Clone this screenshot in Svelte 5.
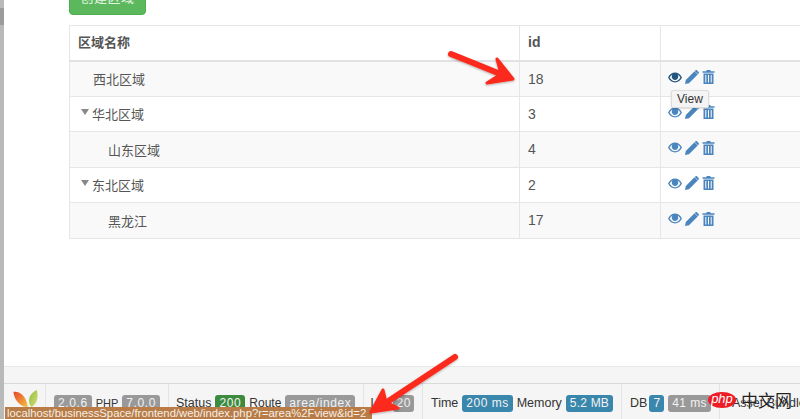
<script>
    const rows = [
        { name: '西北区域', id: 18, level: 'leaf-top' },
        { name: '华北区域', id: 3, level: 'parent' },
        { name: '山东区域', id: 4, level: 'child' },
        { name: '东北区域', id: 2, level: 'parent' },
        { name: '黑龙江', id: 17, level: 'child' }
    ];

    const badges = {
        version: '2.0.6',
        php: '7.0.0'
    };
</script>

{#snippet eye()}
    <svg class="icon" viewBox="0 0 16 12" width="14" height="11" aria-hidden="true">
        <path fill="currentColor" fill-rule="evenodd" d="M0 6C2 2.2 4.8.4 8 .4S14 2.2 16 6c-2 3.8-4.800 5.600-8 5.600S2 9.800 0 6zm1.800 0C3.300 8.600 5.400 10.200 8 10.200S12.700 8.600 14.200 6C13.300 4.500 12.200 3.300 10.900 2.600 11.400 3.300 11.700 4.100 11.700 5c0 2.100-1.700 3.800-3.700 3.800S4.300 7.100 4.300 5c0-.9.300-1.700.8-2.400C3.800 3.300 2.700 4.500 1.800 6z" />
    </svg>
{/snippet}

{#snippet pencil()}
    <svg class="icon" viewBox="0 0 14 14" width="14" height="14" aria-hidden="true">
        <path fill="currentColor" d="M0 14l.8-4L9.500 1.300l3.200 3.200L4 13.200zM10.400.4c.5-.5 1.200-.5 1.700 0l1.500 1.500c.5.5.5 1.200 0 1.700l-.6.6-3.200-3.200z" />
    </svg>
{/snippet}

{#snippet trash()}
    <svg class="icon" viewBox="0 0 12 14" width="13" height="14" aria-hidden="true">
        <path fill="currentColor" fill-rule="evenodd" d="M4.300 0h3.400l.6 1.300H12v1.400H0V1.300h3.700zM1 3.600h10V14H1zm1.800 1.400v7.600h1V5zm2.700 0v7.600h1V5zm2.700 0v7.600h1V5z" />
    </svg>
{/snippet}

<div class="page">
    <div class="gutter"><span class="thumb"></span></div>

    <div class="main">
        <section class="content">
            <button class="create">创建区域</button>

            <table>
                <colgroup>
                    <col class="col-name" />
                    <col class="col-id" />
                    <col class="col-actions" />
                </colgroup>
                <thead>
                    <tr>
                        <th>区域名称</th>
                        <th class="latin">id</th>
                        <th></th>
                    </tr>
                </thead>
                <tbody>
                    {#each rows as row, i}
                        <tr class:striped={i % 2 === 0}>
                            <td class="name {row.level}">
                                {#if row.level === 'parent'}<span class="caret"></span>{/if}{row.name}
                            </td>
                            <td class="latin">{row.id}</td>
                            <td class="actions">
                                <div class="action-icons">
                                    <span class:hovered={i === 0} class="eye-wrap">{@render eye()}</span>
                                    {@render pencil()}
                                    {@render trash()}
                                </div>
                            </td>
                        </tr>
                    {/each}
                </tbody>
            </table>
        </section>

        <div class="strip"></div>

        <footer class="toolbar">
            <div class="block logo">
                <svg viewBox="0 0 28 20" width="26" height="18" aria-hidden="true">
                    <defs>
                        <linearGradient id="leaf-a" x1="0" y1="0" x2="1" y2="1">
                            <stop offset="0" stop-color="#e8452c" />
                            <stop offset="1" stop-color="#f5c33f" />
                        </linearGradient>
                        <linearGradient id="leaf-b" x1="0" y1="0" x2="1" y2="1">
                            <stop offset="0" stop-color="#8fbf3a" />
                            <stop offset="1" stop-color="#d8dd7a" />
                        </linearGradient>
                    </defs>
                    <path fill="url(#leaf-a)" d="M0 2C6 1 14 5 16 19 8 19 1 12 0 2z" />
                    <path fill="url(#leaf-b)" d="M26 0c2 7 1 15-6 19C15 13 17 4 26 0z" />
                </svg>
            </div>
            <div class="block">
                <span class="badge">{badges.version}</span>
                <span class="tight">PHP</span>
                <span class="badge">{badges.php}</span>
            </div>
            <div class="block status">
                <span>Status</span>
                <span class="badge green">200</span>
                <span class="route">Route</span>
                <span class="badge">area/index</span>
            </div>
            <div class="block log">
                <span class="route">Log</span>
                <span class="badge narrow">20</span>
            </div>
            <div class="block">
                <span>Time</span>
                <span class="badge blue time">200 ms</span>
                <span>Memory</span>
                <span class="badge blue">5.2 MB</span>
            </div>
            <div class="block">
                <span class="db">DB</span>
                <span class="badge blue">7</span>
                <span class="badge blue-grey">41 ms</span>
            </div>
            <div class="block assets">
                <span>Asset Bundles</span>
            </div>
        </footer>
    </div>

    <div class="tooltip">View</div>
    <div class="status-url">localhost/businessSpace/frontend/web/index.php?r=area%2Fview&amp;id=2</div>

    <svg class="arrows" viewBox="0 0 800 419" width="800" height="419" aria-hidden="true">
        <defs>
            <filter id="arrow-shadow" x="-10%" y="-10%" width="120%" height="120%">
                <feDropShadow dx="0" dy="1" stdDeviation="1" flood-color="#000" flood-opacity="0.3" />
            </filter>
        </defs>
        <g filter="url(#arrow-shadow)" fill="#fb2a1c" stroke="#fb2a1c" stroke-linejoin="round" stroke-linecap="round">
            <path fill="none" stroke-width="6" d="M451 54L503 75" />
            <path stroke-width="3" d="M497 59L513 79 487 83 501 74z" />
            <path fill="none" stroke-width="6" d="M455 357L384 404" />
            <path stroke-width="3" d="M383 390L371 412 398 408 386 402z" />
        </g>
    </svg>

    <div class="watermark">
        <span class="php">php</span>
        <span class="cn">中文网</span>
    </div>
</div>

<style>
    :global(body) {
        margin: 0;
        background: #fff;
    }

    .page {
        position: relative;
        display: flex;
        width: 800px;
        height: 419px;
        overflow: hidden;
        font-family: "Liberation Sans", "Noto Sans CJK SC", sans-serif;
        color: #333;
    }

    .gutter {
        flex: 0 0 4px;
        background: #b9b9b9;
    }

    .thumb {
        display: block;
        height: 17px;
        margin-top: 8px;
        background: #9c9c9c;
    }

    .main {
        flex: 1;
        min-width: 0;
        display: flex;
        flex-direction: column;
    }

    .content {
        flex: 1;
        padding-left: 65px;
    }

    .create {
        display: block;
        width: 77px;
        height: 34px;
        margin: -19px 0 10px;
        padding: 0 0 4px;
        border: 1px solid #4cae4c;
        border-radius: 4px;
        background: #5cb85c;
        color: #e6f4e6;
        font-family: "Noto Sans CJK SC", sans-serif;
        font-size: 13px;
        letter-spacing: 0.5px;
    }

    table {
        width: 760px;
        table-layout: fixed;
        border-collapse: collapse;
        border: 1px solid #e6e6e6;
        font-size: 13px;
        color: #555;
        font-family: "Noto Sans CJK SC", sans-serif;
    }

    .col-name {
        width: 450px;
    }

    .col-id {
        width: 141px;
    }

    th,
    td {
        height: 35.500px;
        padding: 0 8px;
        border: 1px solid #e6e6e6;
        box-sizing: border-box;
        text-align: left;
        line-height: 1;
    }

    th {
        height: 35px;
        padding-bottom: 2px;
        border-bottom: 2px solid #e2e2e2;
        font-weight: 700;
    }

    .latin {
        font-family: "Liberation Sans", sans-serif;
        font-size: 14px;
    }

    .striped td {
        background: #f9f9f9;
    }

    .name.leaf-top {
        padding-left: 23px;
    }

    .name.child {
        padding-left: 38px;
    }

    .name.parent {
        padding-left: 11px;
    }

    .caret {
        display: inline-block;
        width: 0;
        height: 0;
        margin-right: 3px;
        border-left: 4.500px solid transparent;
        border-right: 4.500px solid transparent;
        border-top: 6px solid #888;
        vertical-align: 4px;
    }

    .actions {
        padding-left: 7px;
    }

    .action-icons {
        display: flex;
        align-items: center;
        gap: 3px;
        margin-top: -3px;
        color: #4a86bd;
    }

    .eye-wrap {
        display: flex;
    }

    .eye-wrap.hovered {
        color: #24557f;
    }

    .strip {
        flex: 0 0 18px;
        box-sizing: border-box;
        background: #f5f5f5;
        border-top: 1px solid #e8e8e8;
        border-bottom: 1px solid #d9d9d9;
    }

    .toolbar {
        flex: 0 0 35px;
        display: flex;
        align-items: flex-start;
        background: #f5f5f5;
        font-size: 12.500px;
        color: #333;
        white-space: nowrap;
    }

    .block {
        flex: none;
        display: flex;
        align-items: center;
        gap: 4px;
        height: 35px;
        padding: 3px 8px 0;
        box-sizing: border-box;
        border-right: 1px solid #e4e4e4;
    }

    .logo {
        width: 42px;
        padding: 6px 0 0 9px;
        align-items: flex-start;
    }

    .status {
        padding-left: 7px;
    }

    .tight {
        font-size: 11px;
    }

    .route {
        font-size: 12px;
    }

    .log {
        gap: 3px;
        padding-left: 6px;
    }

    .db {
        margin-right: -2px;
    }

    .badge {
        padding: 2px 4px;
        border-radius: 3px;
        background: #999;
        color: #f2f2f2;
        font-size: 12px;
        line-height: 13px;
        letter-spacing: 0.6px;
    }

    .narrow {
        padding: 2px 3px;
    }

    .green {
        background: #3c8b3f;
    }

    .blue {
        background: #3a87ad;
        letter-spacing: 0.2px;
    }

    .time {
        letter-spacing: 0.5px;
    }

    .blue-grey {
        letter-spacing: 0.4px;
    }

    .assets {
        border-right: 0;
        padding-left: 12px;
    }

    .tooltip {
        position: absolute;
        left: 671px;
        top: 90px;
        padding: 1px 5px;
        background: #f4f4f4;
        border: 1px solid #ddd;
        border-radius: 2px;
        box-shadow: 0 1px 2px rgba(0, 0, 0, 0.15);
        font-size: 12px;
        line-height: 14px;
        color: #333;
    }

    .status-url {
        position: absolute;
        left: 5px;
        bottom: 0;
        width: 367px;
        height: 12px;
        box-sizing: border-box;
        padding-left: 2px;
        background: #b97c46;
        color: #f4efe8;
        font-size: 11.300px;
        line-height: 12px;
        white-space: nowrap;
        overflow: hidden;
    }

    .arrows {
        position: absolute;
        inset: 0;
        pointer-events: none;
    }

    .watermark {
        position: absolute;
        left: 708px;
        top: 390px;
        display: flex;
        align-items: center;
        gap: 5px;
    }

    .php {
        flex: none;
        width: 28px;
        height: 16px;
        border-radius: 50%;
        background: #ee1c25;
        color: #fff;
        font-family: "Liberation Sans", sans-serif;
        font-style: italic;
        font-size: 13px;
        line-height: 14px;
        text-align: center;
    }

    .cn {
        font-family: "Noto Sans CJK SC", sans-serif;
        font-size: 17px;
        line-height: 20px;
        color: #222;
        text-shadow: 0 0 1px #fff;
    }
</style>
